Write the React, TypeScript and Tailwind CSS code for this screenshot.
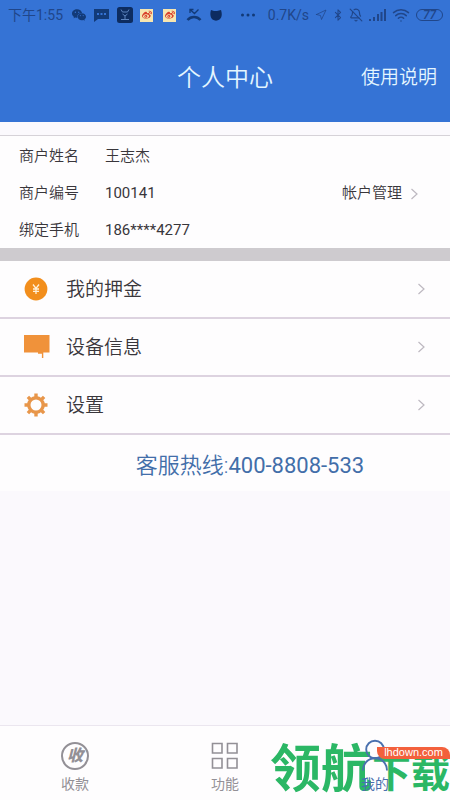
import type { ReactNode } from 'react';
import { BellOff, Bluetooth, Navigation, Wifi } from 'lucide-react';
import { AiFillWechat } from 'react-icons/ai';
import { FaWeibo } from 'react-icons/fa';

interface MenuItem {
  label: string;
  icon: ReactNode;
}

const info = [
  { label: '商户姓名', value: '王志杰' },
  { label: '商户编号', value: '100141', numeric: true, action: '帐户管理' },
  { label: '绑定手机', value: '186****4277', numeric: true },
];

function Chevron() {
  return (
    <svg className="w-2 h-3 text-[#bdb8c0]" viewBox="0 0 8 12" fill="none" stroke="currentColor" strokeWidth="1.2">
      <path d="M1.5 1l5.500 5-5.500 5" />
    </svg>
  );
}

function CoinIcon() {
  return (
    <svg className="w-6 h-6" viewBox="0 0 24 24" fill="none">
      <circle cx="12" cy="12" r="11.4" fill="#f28e1c" />
      <path d="M9 7.5l3 4 3-4M12 11.5v5.5M9 12h6M9 14.4h6" stroke="#fff0d8" strokeWidth="1.3" />
    </svg>
  );
}

function DeviceIcon() {
  return (
    <svg className="w-[26px] h-6" viewBox="0 0 26 24" fill="#f0923a">
      <path d="M0 0h25.5v17.5h-6.2V23h-1.400v-4.200H14v-1.300H0z" />
    </svg>
  );
}

function GearIcon() {
  return (
    <svg className="w-6 h-6" viewBox="0 0 24 24" fill="none" stroke="#e8964a">
      <circle cx="12" cy="12" r="7.2" strokeWidth="3.4" />
      <g strokeWidth="3.4">
        <path d="M12 .5v4M12 19.5v4M.5 12h4M19.5 12h4" />
        <path d="M3.9 3.9l2.8 2.8M17.3 17.3l2.8 2.8M3.9 20.1l2.8-2.8M17.3 6.7l2.8-2.8" />
      </g>
    </svg>
  );
}

function GridIcon() {
  return (
    <svg className="w-7 h-7" viewBox="0 0 28 28" fill="none" stroke="currentColor" strokeWidth="1.6">
      <path d="M1.5 1.5H11V11H1.5zM16.5 1.5H26V11h-9.5zM1.5 16.5H11V26H1.5zM16.5 16.5H26V26h-9.5z" />
    </svg>
  );
}

function PersonIcon() {
  return (
    <svg className="w-7 h-7 overflow-visible" viewBox="0 0 28 28" fill="none" stroke="currentColor" strokeWidth="1.9">
      <circle cx="14" cy="7.5" r="8.8" />
      <path d="M2 28.5c0-7 5-12.3 12-12.3s12 5.300 12 12.300" />
    </svg>
  );
}

const menu: MenuItem[] = [
  { label: '我的押金', icon: <CoinIcon /> },
  { label: '设备信息', icon: <DeviceIcon /> },
  { label: '设置', icon: <GearIcon /> },
];

function StatusBar() {
  return (
    <div className="flex h-[30px] items-center justify-between pl-2 pr-[7px] text-sm whitespace-nowrap text-[#20468a]">
      <div className="flex items-center gap-[7px]">
        <span className="w-14">下午1:55</span>
        <AiFillWechat className="w-4 h-[18px] text-[#123a78]" />
        <svg className="w-4 h-4" viewBox="0 0 16 16" fill="#123a78">
          <path d="M0 2h15v10H4l-4 3z" />
          <path d="M3 6h2v2H3zM6.5 6h2v2h-2zM10 6h2v2h-2z" fill="#3573d5" />
        </svg>
        <svg className="w-4 h-4" viewBox="0 0 16 16" fill="none">
          <rect width="16" height="16" rx="2.5" fill="#0d2c60" />
          <path d="M4 2.5l1.5 2.5h5L12 2.5M5.5 7l2.5 2 2.5-2M8 9v3M4 12.5h8" stroke="#5c83bd" />
        </svg>
        {[0, 1].map((i) => (
          <span key={i} className="w-4">
            <span className="flex w-[13px] h-[13px] items-center justify-center bg-[#f7e6b0]">
              <FaWeibo className="w-[10px] h-[10px] text-[#d9402b]" />
            </span>
          </span>
        ))}
        <svg className="w-4 h-4" viewBox="0 0 16 16" fill="none" stroke="#123a78">
          <path d="M4 6V2.5h3.5M4 2.5l4.500 4 4-4" strokeWidth="1.3" />
          <path d="M1.5 13c3.5-4 9.500-4 13 0" strokeWidth="2.6" />
        </svg>
        <svg className="w-4 h-4" viewBox="0 0 16 16" fill="#0d2c60">
          <path d="M2 3l3 1h3l4-1c1 3 1.5 7-1.5 9.5-2 1.500-5 1.500-7 0C1 10 1 6 2 3z" />
        </svg>
        <svg className="ml-2 w-4 h-4" viewBox="0 0 16 16" fill="#123a78">
          <circle cx="2.5" cy="8" r="1.5" />
          <circle cx="8" cy="8" r="1.5" />
          <circle cx="13.5" cy="8" r="1.5" />
        </svg>
      </div>
      <div className="flex items-center gap-1.5">
        <span>0.7K/s</span>
        <Navigation className="w-3 h-3" strokeWidth={1.5} />
        <Bluetooth className="w-2.5 h-3.5 scale-125" />
        <BellOff className="w-3.5 h-3.5" />
        <svg className="w-[17px] h-3" viewBox="0 0 17 12" fill="currentColor">
          <path d="M0 10h2v2H0zM4 8h2v4H4zM8 5h2v7H8zM11.5 3h2v9h-2zM15 0h2v12h-2z" />
        </svg>
        <Wifi className="w-[18px] h-[18px]" />
        <span className="flex h-3 w-[27px] items-center justify-center rounded-full border border-current text-xs font-medium italic">
          77
        </span>
      </div>
    </div>
  );
}

export default function App() {
  return (
    <div className="flex min-h-screen flex-col bg-[#fbf9fd] font-[Roboto,'Noto_Sans_CJK_SC',sans-serif] text-[#39363b]">
      <header className="bg-[#3573d5]">
        <StatusBar />
        <div className="grid h-[92px] grid-cols-[1fr_auto_1fr] items-center px-[13px] pt-1 text-[#e4f6ff]">
          <h1 className="col-start-2 text-2xl font-[350]">个人中心</h1>
          <button className="justify-self-end text-[19px] font-[350]">使用说明</button>
        </div>
      </header>

      <main className="mt-[13px] grow">
        <dl className="border-t border-[#d6d2d8] bg-[#fefdfe] pt-px text-[15px] font-[350]">
          {info.map((row) => (
            <div key={row.label} className="flex h-[37px] items-center pt-0.5 pl-[19px] pr-8">
              <dt className="w-[86px]">{row.label}</dt>
              <dd className="flex grow items-center justify-between">
                <span className={row.numeric ? 'font-normal' : ''}>{row.value}</span>
                {row.action && (
                  <button className="flex items-center gap-2">
                    {row.action}
                    <Chevron />
                  </button>
                )}
              </dd>
            </div>
          ))}
        </dl>

        <div className="h-[13px] bg-[#cecbcf]" />

        <div className="bg-[#fefdfe]">
          {menu.map((item) => (
            <button
              key={item.label}
              className="flex h-[58px] w-full items-center border-b-2 border-[#ddd3e0] pl-6 pr-[25px] text-[19px] font-[350]"
            >
              <span className="w-[42px]">{item.icon}</span>
              <span className="grow pt-0.5 text-left">{item.label}</span>
              <Chevron />
            </button>
          ))}
          <a
            href="tel:400-8808-533"
            className="flex h-14 items-center justify-center pt-1 pl-[50px] text-[22px] font-[350] text-[#426ea9]"
          >
            客服热线:<span className="font-normal">400-8808-533</span>
          </a>
        </div>
      </main>

      <nav className="relative grid h-[75px] grid-cols-3 border-t border-[#ebe6ef] bg-[#fefdfe] text-sm text-[#939096]">
        {/* site watermark, under the tab labels */}
        <div className="absolute right-0 bottom-0 flex items-baseline leading-[52px] font-bold text-[#2bb765]">
          <span className="text-[51px]">领航</span>
          <span className="text-[39px]">下载</span>
        </div>
        <button className="relative flex flex-col items-center gap-1 pt-4">
          <span className="flex w-7 h-7 items-center justify-center rounded-full border-2 border-current text-base font-black italic">
            收
          </span>
          收款
        </button>
        <button className="relative flex flex-col items-center gap-1 pt-4">
          <GridIcon />
          功能
        </button>
        <button className="relative flex flex-col items-center gap-1 pt-4 text-[#4a70ae]">
          <PersonIcon />
          我的
        </button>
        <div className="absolute top-[21px] right-0 flex h-3 w-[73px] items-center justify-center rounded-tr-lg rounded-bl-lg bg-[#f3603c] font-['Liberation_Sans',sans-serif] text-[11px] text-white">
          lhdown.com
        </div>
      </nav>
    </div>
  );
}
